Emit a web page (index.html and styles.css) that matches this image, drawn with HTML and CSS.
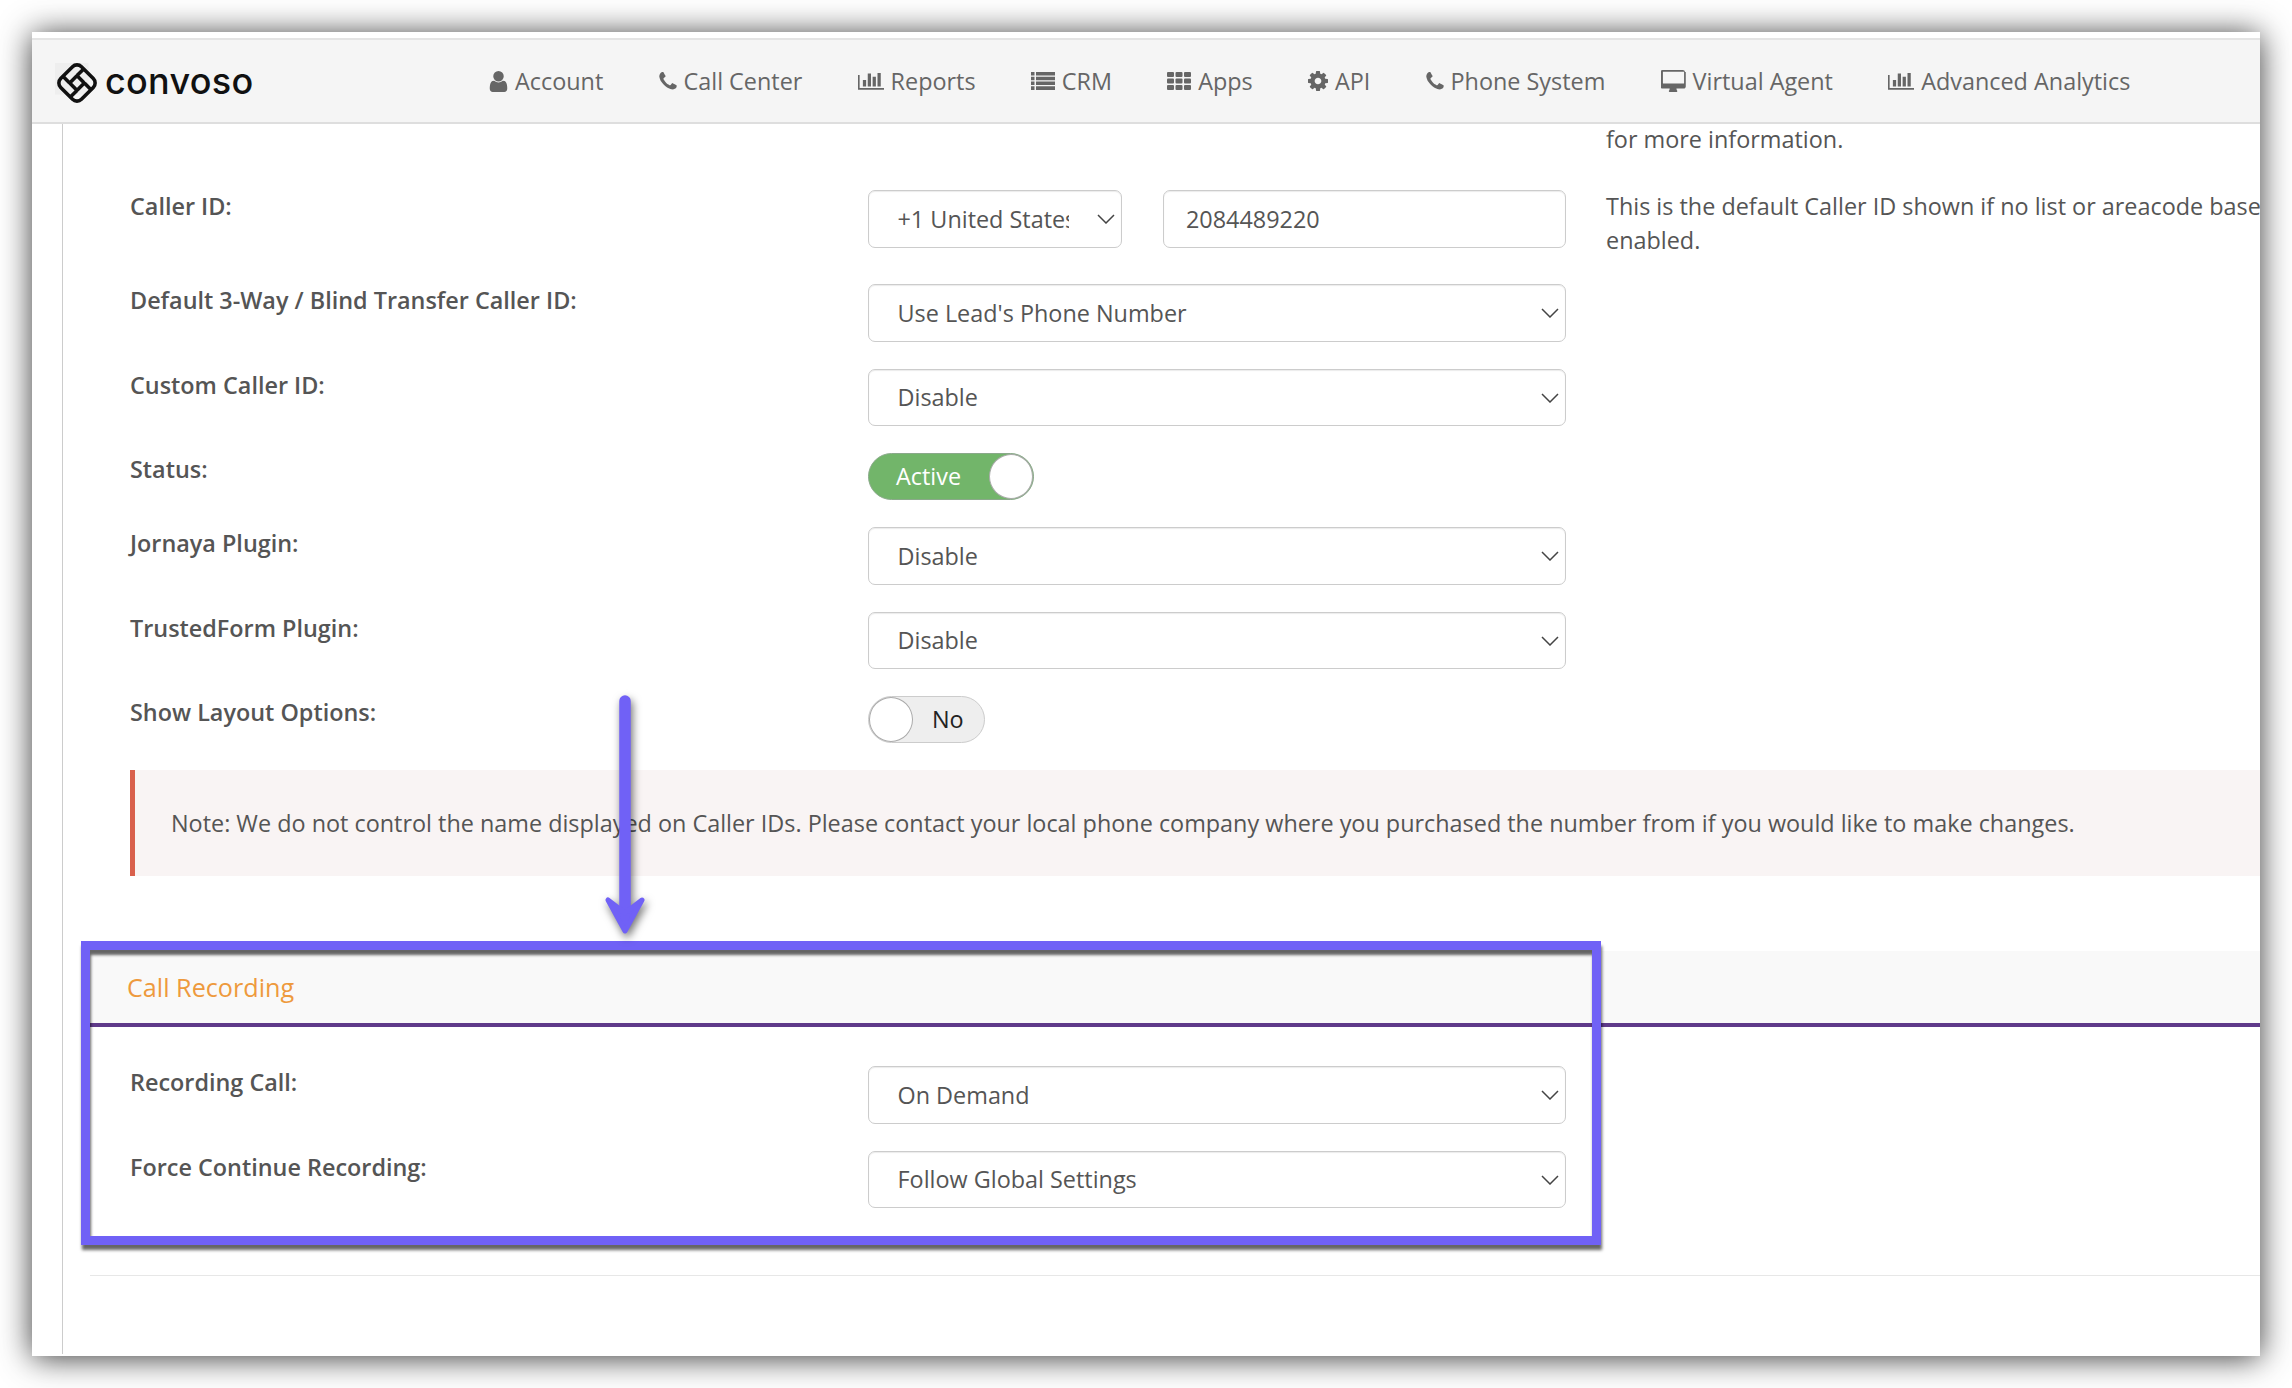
FILE: index.html
```html
<!DOCTYPE html>
<html lang="en">
<head>
<meta charset="utf-8">
<title>Convoso - Call Recording</title>
<link rel="stylesheet" href="styles.css">
</head>
<body>
<svg class="defs" width="0" height="0" aria-hidden="true">
  <symbol id="i-user" viewBox="224 128 1344 1536"><path d="M1536 1399q0 109-62.500 187t-150.500 78h-854q-88 0-150.500-78t-62.500-187q0-85 8.500-160.500t31.500-152 58.500-131 94-89 134.500-34.500q131 128 313 128t313-128q76 0 134.500 34.500t94 89 58.500 131 31.500 152 8.500 160.500zm-256-887q0 159-112.500 271.500t-271.500 112.500-271.500-112.500-112.500-271.500 112.500-271.500 271.500-112.500 271.500 112.500 112.500 271.500z"/></symbol>
  <symbol id="i-phone" viewBox="192 128 1408 1536"><path d="M1600 1240q0 27-10 70.500t-21 68.500q-21 50-122 106-94 51-186 51-27 0-53-3.500t-57.500-12.500-47-14.500-55.500-20.500-49-18q-98-35-175-83-127-79-264-216t-216-264q-48-77-83-175-3-9-18-49t-20.500-55.500-14.500-47-12.500-57.500-3.500-53q0-92 51-186 56-101 106-122 25-11 68.500-21t70.500-10q14 0 21 3 18 6 53 76 11 19 30 54t35 63.500 31 53.500q3 4 17.500 25t21.500 35.500 7 28.500q0 20-28.500 50t-62 55-62 53-28.500 46q0 9 5 22.500t8.500 20.500 14 24 11.500 19q76 137 174 235t235 174q2 1 19 11.500t24 14 20.500 8.500 22.500 5q18 0 46-28.500t53-62 55-62 50-28.500q14 0 28.500 7t35.500 21.500 25 17.500q25 15 53.500 31t63.500 35 54 30q70 35 76 53 3 7 3 21z"/></symbol>
  <symbol id="i-chart" viewBox="0 384 2048 1280"><path d="M640 896v512h-256v-512h256zm384-512v1024h-256v-1024h256zm1024 1152v128h-2048v-1152h128v1024h1920zm-640-896v768h-256v-768h256zm384-384v1152h-256v-1152h256z"/></symbol>
  <symbol id="i-list" viewBox="0 0 24 18"><path d="M0 0h3.500v3.500H0zM5 0h19v3.500H5zM0 4.700h3.500v3.500H0zM5 4.700h19v3.500H5zM0 9.500h3.500V13H0zM5 9.500h19V13H5zM0 14.300h3.500V18H0zM5 14.300h19V18H5z"/></symbol>
  <symbol id="i-apps" viewBox="0 0 24 18"><rect width="7" height="5" rx="1"/><rect x="8.500" width="7" height="5" rx="1"/><rect x="17" width="7" height="5" rx="1"/><rect y="6.500" width="7" height="5" rx="1"/><rect x="8.500" y="6.500" width="7" height="5" rx="1"/><rect x="17" y="6.500" width="7" height="5" rx="1"/><rect y="13" width="7" height="5" rx="1"/><rect x="8.500" y="13" width="7" height="5" rx="1"/><rect x="17" y="13" width="7" height="5" rx="1"/></symbol>
  <symbol id="i-cog" viewBox="128 128 1536 1536"><path d="M1152 896q0-106-75-181t-181-75-181 75-75 181 75 181 181 75 181-75 75-181zm512-109v222q0 12-8 23t-20 13l-185 28q-19 54-39 91 35 50 107 138 10 12 10 25t-9 23q-27 37-99 108t-94 71q-12 0-26-9l-138-108q-44 23-91 38-16 136-29 186-7 28-36 28h-222q-14 0-24.500-8.500t-11.500-21.500l-28-184q-49-16-90-37l-141 107q-10 9-25 9-14 0-25-11-126-114-165-168-7-10-7-23 0-12 8-23 15-21 51-66.500t54-70.500q-27-50-41-99l-183-27q-13-2-21-12.500t-8-23.500v-222q0-12 8-23t19-13l186-28q14-46 39-92-40-57-107-138-10-12-10-24 0-10 9-23 26-36 98.500-107.500t94.500-71.500q13 0 26 10l138 107q44-23 91-38 16-136 29-186 7-28 36-28h222q14 0 24.500 8.500t11.500 21.500l28 184q49 16 90 37l142-107q9-9 24-9 13 0 25 10 129 119 165 170 7 8 7 22 0 12-8 23-15 21-51 66.500t-54 70.500q26 50 41 98l183 28q13 2 21 12.500t8 23.500z"/></symbol>
  <symbol id="i-desktop" viewBox="0 0 1856 1664"><path d="M1728 992v-832q0-13-9.500-22.500t-22.500-9.500h-1536q-13 0-22.500 9.500t-9.500 22.500v832q0 13 9.500 22.500t22.500 9.500h1536q13 0 22.500-9.500t9.500-22.500zm128-832v1088q0 66-47 113t-113 47h-544q0 37 16 77.500t32 71 16 43.500q0 26-19 45t-45 19h-512q-26 0-45-19t-19-45q0-14 16-44t32-70 16-78h-544q-66 0-113-47t-47-113v-1088q0-66 47-113t113-47h1536q66 0 113 47t47 113z"/></symbol>
  <symbol id="i-chev" viewBox="0 0 18 10"><path d="M1 1l8 8 8-8" fill="none" stroke="#444" stroke-width="1.500"/></symbol>
</svg>

<div class="window">
  <header class="topbar">
    <a class="brand" href="#">
      <svg class="brand-mark" viewBox="0 0 42 42">
        <rect x="0" y="2" width="32" height="30" fill="#eeeeee"/>
        <g transform="rotate(45 21 21)" fill="none" stroke="#111" stroke-width="3.400">
          <rect x="7" y="7" width="28" height="28" rx="6"/>
          <rect x="16" y="16" width="10" height="10" rx="1.500"/>
          <path d="M16 7v9M26 35v-9M7 26h9M35 16h-9"/>
        </g>
      </svg>
      <span class="brand-name">convoso</span>
    </a>
    <nav class="nav">
      <a class="nav-item" href="#"><svg class="ic ic-user"><use href="#i-user"/></svg>Account</a>
      <a class="nav-item" href="#"><svg class="ic ic-phone"><use href="#i-phone"/></svg>Call Center</a>
      <a class="nav-item" href="#"><svg class="ic ic-chart"><use href="#i-chart"/></svg>Reports</a>
      <a class="nav-item" href="#"><svg class="ic ic-list"><use href="#i-list"/></svg>CRM</a>
      <a class="nav-item" href="#"><svg class="ic ic-list"><use href="#i-apps"/></svg>Apps</a>
      <a class="nav-item" href="#"><svg class="ic ic-cog"><use href="#i-cog"/></svg>API</a>
      <a class="nav-item" href="#"><svg class="ic ic-phone"><use href="#i-phone"/></svg>Phone System</a>
      <a class="nav-item" href="#"><svg class="ic ic-desktop"><use href="#i-desktop"/></svg>Virtual Agent</a>
      <a class="nav-item" href="#"><svg class="ic ic-chart"><use href="#i-chart"/></svg>Advanced Analytics</a>
    </nav>
  </header>

  <main class="main">
    <div class="form">
      <p class="help help-top">for more information.</p>

      <div class="row row-first">
        <label class="label">Caller ID:</label>
        <div class="control control-pair">
          <div class="select-wrap select-country">
            <select class="field select"><option>+1 United States</option></select>
            <svg class="chev"><use href="#i-chev"/></svg>
          </div>
          <input class="field input" type="text" value="2084489220">
        </div>
        <p class="help">This is the default Caller ID shown if no list or areacode based Caller ID is<br>enabled.</p>
      </div>

      <div class="row">
        <label class="label">Default 3-Way / Blind Transfer Caller ID:</label>
        <div class="control select-wrap">
          <select class="field select"><option>Use Lead's Phone Number</option></select>
          <svg class="chev"><use href="#i-chev"/></svg>
        </div>
      </div>

      <div class="row">
        <label class="label">Custom Caller ID:</label>
        <div class="control select-wrap">
          <select class="field select"><option>Disable</option></select>
          <svg class="chev"><use href="#i-chev"/></svg>
        </div>
      </div>

      <div class="row">
        <label class="label">Status:</label>
        <div class="control">
          <div class="toggle toggle-on"><span class="toggle-text">Active</span><span class="knob"></span></div>
        </div>
      </div>

      <div class="row">
        <label class="label">Jornaya Plugin:</label>
        <div class="control select-wrap">
          <select class="field select"><option>Disable</option></select>
          <svg class="chev"><use href="#i-chev"/></svg>
        </div>
      </div>

      <div class="row">
        <label class="label">TrustedForm Plugin:</label>
        <div class="control select-wrap">
          <select class="field select"><option>Disable</option></select>
          <svg class="chev"><use href="#i-chev"/></svg>
        </div>
      </div>

      <div class="row">
        <label class="label">Show Layout Options:</label>
        <div class="control">
          <div class="toggle toggle-off"><span class="knob"></span><span class="toggle-text">No</span></div>
        </div>
      </div>

      <div class="note">Note: We do not control the name displayed on Caller IDs. Please contact your local phone company where you purchased the number from if you would like to make changes.</div>
    </div>

    <section class="section">
      <h2 class="section-title">Call Recording</h2>
      <div class="form form-section">
        <div class="row">
          <label class="label">Recording Call:</label>
          <div class="control select-wrap">
            <select class="field select"><option>On Demand</option></select>
            <svg class="chev"><use href="#i-chev"/></svg>
          </div>
        </div>
        <div class="row">
          <label class="label">Force Continue Recording:</label>
          <div class="control select-wrap">
            <select class="field select"><option>Follow Global Settings</option></select>
            <svg class="chev"><use href="#i-chev"/></svg>
          </div>
        </div>
      </div>
    </section>
    <hr class="rule">
  </main>

  <div class="callout-box"></div>
  <svg class="callout-arrow" viewBox="0 0 50 250">
    <path d="M25 10V228" fill="none" stroke="#7061f6" stroke-width="11.500" stroke-linecap="round"/>
    <path d="M8 209 L25 240 L42 209 L25 222 Z" fill="#7061f6" stroke="#7061f6" stroke-width="5" stroke-linejoin="round"/>
  </svg>
</div>
</body>
</html>
```

FILE: styles.css
```css
* { box-sizing: border-box; }

html, body {
  margin: 0;
  padding: 0;
  background: #fff;
}

body {
  width: 2292px;
  height: 1388px;
  overflow: hidden;
  padding: 32px;
  font-family: "Open Sans", "Liberation Sans", sans-serif;
  font-size: 23.4px;
  line-height: 34px;
  color: #555;
}

.defs { position: absolute; }

.window {
  position: relative;
  width: 2228px;
  height: 1324px;
  overflow: hidden;
  background: #fff;
  box-shadow: 0 2px 30px rgba(0, 0, 0, .78);
  padding-top: 6px;
  isolation: isolate;
}

/* top bar */
.topbar {
  position: relative;
  z-index: 2;
  display: flex;
  align-items: center;
  height: 86px;
  padding-left: 23px;
  background: #f5f5f5;
  border-top: 2px solid #e4e4e4;
  border-bottom: 2px solid #dedede;
}

.brand {
  display: flex;
  align-items: center;
  gap: 6px;
  width: 434px;
  text-decoration: none;
  color: #111;
}

.brand-mark { width: 44px; height: 44px; flex: none; margin-top: 4px; }

.brand-name {
  font-family: Inter, "Open Sans", sans-serif;
  font-size: 36px;
  font-weight: 500;
  letter-spacing: .3px;
  line-height: 44px;
}

.nav {
  display: flex;
  align-items: center;
  gap: 55.2px;
}

.nav-item {
  display: flex;
  align-items: center;
  gap: 7px;
  color: #666;
  text-decoration: none;
  white-space: nowrap;
}

.ic { display: block; fill: #666; flex: none; }
.ic-user { width: 19px; height: 21px; }
.ic-phone { width: 18px; height: 19px; }
.ic-chart { width: 26px; height: 17px; }
.ic-list { width: 24px; height: 18px; }
.ic-cog { width: 20px; height: 20px; }
.ic-desktop { width: 25px; height: 22px; }

/* page body */
.main {
  margin-left: 30px;
  height: 1232px;
  border-left: 1px solid #ccc;
}

.form { padding-left: 67px; }

.help { margin: 0; white-space: nowrap; }

.help-top { padding-left: 1476px; height: 34px; margin-top: -2px; }

.row {
  display: flex;
  align-items: flex-start;
  margin-top: 27px;
}

.row-first { margin-top: 34px; margin-bottom: 27px; }
.row-first + .row { margin-top: 0; }

.label {
  width: 738px;
  flex: none;
  font-weight: 600;
  line-height: 33px;
  color: #555;
}

.control { width: 698px; flex: none; }

.control-pair {
  display: flex;
  gap: 41px;
}

.select-wrap { position: relative; }
.select-country { width: 254px; flex: none; }

.field {
  display: block;
  width: 100%;
  height: 57.5px;
  margin: 0;
  font: inherit;
  color: #555;
  background: #fff;
  border: 1px solid #ccc;
  border-radius: 7px;
  box-shadow: inset 0 1px 1px rgba(0, 0, 0, .08);
  outline: none;
}

.select {
  appearance: none;
  padding: 0 40px 0 28.5px;
}

.select-country .select { padding-right: 52px; }

.input { flex: 1; min-width: 0; padding: 0 22px; }

.chev {
  position: absolute;
  right: 7px;
  top: 24px;
  width: 18px;
  height: 10px;
  pointer-events: none;
}

.row-first .help { margin-left: 40px; margin-top: -1px; }

/* toggles */
.toggle {
  display: flex;
  align-items: center;
  height: 47px;
  border-radius: 24px;
  border: 1px solid #ccc;
}

.toggle-on {
  width: 166px;
  justify-content: space-between;
  padding-left: 27px;
  background: #72b56a;
  border-color: #8aa98a;
  color: #fff;
}

.toggle-off {
  width: 117px;
  gap: 19px;
  background: #eee;
  color: #222;
}

.toggle-text { position: relative; top: -1px; }

.knob {
  width: 44px;
  height: 45px;
  flex: none;
  background: #fff;
  border-radius: 50%;
  border: 1px solid #aaa;
}

/* note */
.note {
  display: flex;
  align-items: center;
  height: 106px;
  margin-top: 27px;
  padding-left: 36px;
  background: #f9f4f4;
  border-left: 5px solid #d9604c;
  white-space: nowrap;
}

/* section */
.section { margin: 75px 0 0 27px; }

.section-title {
  margin: 0;
  display: flex;
  align-items: center;
  height: 76px;
  padding: 0 0 0 37px;
  font-size: 25.2px;
  font-weight: 400;
  color: #ee9a3d;
  background: #f9f9f9;
  border-bottom: 4px solid #5f3a8a;
}

.form-section { padding-left: 40px; padding-top: 12px; }

.rule {
  margin: 67px 0 0 27px;
  height: 1px;
  border: 0;
  background: #e7e7e7;
}

/* annotation overlays */
.callout-box {
  position: absolute;
  left: 49px;
  top: 909px;
  width: 1520px;
  height: 304px;
  border: 9px solid #7061f6;
  box-shadow: 1px 5px 3px rgba(0, 0, 0, .6), inset 1px 5px 3px rgba(0, 0, 0, .6);
  z-index: 3;
}

.callout-arrow {
  position: absolute;
  left: 568px;
  top: 659px;
  width: 50px;
  height: 250px;
  z-index: 4;
  filter: drop-shadow(2px 4px 4px rgba(0, 0, 0, .55));
}
```
